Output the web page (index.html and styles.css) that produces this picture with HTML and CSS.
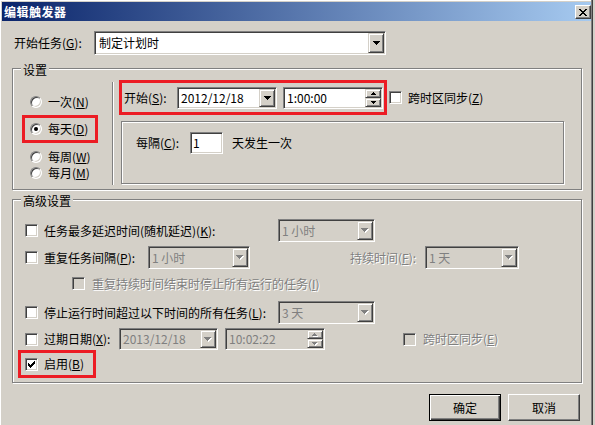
FILE: index.html
```html
<!DOCTYPE html>
<html lang="zh-CN">
<head>
<meta charset="utf-8">
<title>编辑触发器</title>
<link rel="stylesheet" href="styles.css">
</head>
<body>
<div class="window">
  <div class="titlebar">
    <span class="title">编辑触发器</span>
    <span class="close-btn"><svg width="8" height="7" viewBox="0 0 8 7"><path d="M0 0h2v1H0zM6 0h2v1H6zM1 1h2v1H1zM5 1h2v1H5zM2 2h4v1H2zM3 3h2v1H3zM2 4h4v1H2zM1 5h2v1H1zM5 5h2v1H5zM0 6h2v1H0zM6 6h2v1H6z" fill="#000"/></svg></span>
  </div>

  <div class="task-row">
    <span class="task-label">开始任务(<u>G</u>):</span>
    <div class="sunken combo combo-task">
      <span class="ctext">制定计划时</span>
      <span class="raised drop"><svg class="arrow" width="7" height="4" viewBox="0 0 7 4"><path d="M0 0h7v1H0zM1 1h5v1H1zM2 2h3v1H2zM3 3h1v1H3z"/></svg></span>
    </div>
  </div>

  <div class="group group-settings">
    <span class="legend">设置</span>
    <div class="radios">
      <div class="radio-item"><span class="radio"></span><span class="rlabel">一次(<u>N</u>)</span></div>
      <div class="mark mark-daily">
        <div class="radio-item"><span class="radio checked"></span><span class="rlabel">每天(<u>D</u>)</span></div>
      </div>
      <div class="radio-item r-week"><span class="radio"></span><span class="rlabel">每周(<u>W</u>)</span></div>
      <div class="radio-item"><span class="radio"></span><span class="rlabel">每月(<u>M</u>)</span></div>
    </div>
    <div class="vsep"></div>
    <div class="schedule">
      <div class="start-row">
        <div class="mark mark-start">
          <span class="start-label">开始(<u>S</u>):</span>
          <div class="sunken combo combo-date">
            <span class="ctext">2012/12/18</span>
            <span class="raised drop"><svg class="arrow" width="7" height="4" viewBox="0 0 7 4"><path d="M0 0h7v1H0zM1 1h5v1H1zM2 2h3v1H2zM3 3h1v1H3z"/></svg></span>
          </div>
          <div class="sunken combo field-time">
            <span class="ctext">1:00:00</span>
            <span class="spin">
              <span class="raised"><svg class="arrow" width="5" height="3" viewBox="0 0 5 3"><path d="M2 0h1v1H2zM1 1h3v1H1zM0 2h5v1H0z"/></svg></span>
              <span class="raised"><svg class="arrow" width="5" height="3" viewBox="0 0 5 3"><path d="M0 0h5v1H0zM1 1h3v1H1zM2 2h1v1H2z"/></svg></span>
            </span>
          </div>
        </div>
        <span class="check check-tz"></span><span class="lbl">跨时区同步(<u>Z</u>)</span>
      </div>
      <div class="etched recur">
        <span class="recur-label">每隔(<u>C</u>):</span>
        <span class="sunken field-num">1</span>
        <span class="recur-text">天发生一次</span>
      </div>
    </div>
  </div>

  <div class="group group-adv">
    <span class="legend">高级设置</span>

    <div class="adv-row row-a">
      <span class="check"></span>
      <span class="lbl w-long">任务最多延迟时间(随机延迟)(<u>K</u>):</span>
      <div class="sunken combo dis-field w-97">
        <span class="ctext">1 小时</span>
        <span class="raised drop"><svg class="arrow" width="8" height="5" viewBox="0 0 8 5"><path fill="#fff" d="M1 1h7v1H1zM2 2h5v1H2zM3 3h3v1H3zM4 4h1v1H4z"/><path fill="#808080" d="M0 0h7v1H0zM1 1h5v1H1zM2 2h3v1H2zM3 3h1v1H3z"/></svg></span>
      </div>
    </div>

    <div class="adv-row row-b">
      <span class="check"></span>
      <span class="lbl w-repeat">重复任务间隔(<u>P</u>):</span>
      <div class="sunken combo dis-field w-102">
        <span class="ctext">1 小时</span>
        <span class="raised drop"><svg class="arrow" width="8" height="5" viewBox="0 0 8 5"><path fill="#fff" d="M1 1h7v1H1zM2 2h5v1H2zM3 3h3v1H3zM4 4h1v1H4z"/><path fill="#808080" d="M0 0h7v1H0zM1 1h5v1H1zM2 2h3v1H2zM3 3h1v1H3z"/></svg></span>
      </div>
      <span class="dis-text lbl-duration">持续时间(<u>F</u>):</span>
      <div class="sunken combo dis-field w-94">
        <span class="ctext">1 天</span>
        <span class="raised drop"><svg class="arrow" width="8" height="5" viewBox="0 0 8 5"><path fill="#fff" d="M1 1h7v1H1zM2 2h5v1H2zM3 3h3v1H3zM4 4h1v1H4z"/><path fill="#808080" d="M0 0h7v1H0zM1 1h5v1H1zM2 2h3v1H2zM3 3h1v1H3z"/></svg></span>
      </div>
    </div>

    <div class="adv-row row-c">
      <span class="check dis"></span>
      <span class="lbl lbl-c dis-text">重复持续时间结束时停止所有运行的任务(<u>I</u>)</span>
    </div>

    <div class="adv-row row-d">
      <span class="check"></span>
      <span class="lbl w-long">停止运行时间超过以下时间的所有任务(<u>L</u>):</span>
      <div class="sunken combo dis-field w-97">
        <span class="ctext">3 天</span>
        <span class="raised drop"><svg class="arrow" width="8" height="5" viewBox="0 0 8 5"><path fill="#fff" d="M1 1h7v1H1zM2 2h5v1H2zM3 3h3v1H3zM4 4h1v1H4z"/><path fill="#808080" d="M0 0h7v1H0zM1 1h5v1H1zM2 2h3v1H2zM3 3h1v1H3z"/></svg></span>
      </div>
    </div>

    <div class="adv-row row-e">
      <span class="check"></span>
      <span class="lbl w-expire">过期日期(<u>X</u>):</span>
      <div class="sunken combo dis-field w-99">
        <span class="ctext">2013/12/18</span>
        <span class="raised drop"><svg class="arrow" width="8" height="5" viewBox="0 0 8 5"><path fill="#fff" d="M1 1h7v1H1zM2 2h5v1H2zM3 3h3v1H3zM4 4h1v1H4z"/><path fill="#808080" d="M0 0h7v1H0zM1 1h5v1H1zM2 2h3v1H2zM3 3h1v1H3z"/></svg></span>
      </div>
      <div class="sunken combo dis-field w-100 time-exp">
        <span class="ctext">10:02:22</span>
        <span class="spin">
          <span class="raised"><svg width="6" height="4" viewBox="0 0 6 4"><path fill="#fff" d="M3 1h1v1H3zM2 2h3v1H2zM1 3h5v1H1z"/><path fill="#808080" d="M2 0h1v1H2zM1 1h3v1H1zM0 2h5v1H0z"/></svg></span>
          <span class="raised"><svg width="6" height="4" viewBox="0 0 6 4"><path fill="#fff" d="M1 1h5v1H1zM2 2h3v1H2zM3 3h1v1H3z"/><path fill="#808080" d="M0 0h5v1H0zM1 1h3v1H1zM2 2h1v1H2z"/></svg></span>
        </span>
      </div>
      <span class="check dis check-tz2"></span>
      <span class="lbl lbl-tz2 dis-text">跨时区同步(<u>E</u>)</span>
    </div>

    <div class="mark mark-enable">
      <span class="check"><svg width="7" height="7" viewBox="0 0 7 7"><path d="M6 0h1v1H6zM5 1h2v1H5zM0 2h1v1H0zM4 2h3v1H4zM0 3h2v1H0zM3 3h3v1H3zM0 4h5v1H0zM1 5h3v1H1zM2 6h1v1H2z" fill="#000"/></svg></span>
      <span class="lbl">启用(<u>B</u>)</span>
    </div>
  </div>

  <div class="buttons">
    <span class="btn default">确定</span>
    <span class="btn">取消</span>
  </div>
</div>
</body>
</html>
```

FILE: styles.css
```css
html, body {
  margin: 0;
  padding: 0;
}
body {
  background: #d4d0c8;
  font-family: "Noto Sans CJK SC", "Microsoft YaHei", sans-serif;
  font-size: 12px;
  line-height: 16px;
  color: #000;
}
u {
  text-decoration: underline;
  text-underline-offset: 1px;
}

.window {
  width: 593px;
  height: 425px;
  box-sizing: border-box;
  padding: 2px 1px 0 2px;
  border-right: 1px solid #404040;
  box-shadow: inset -1px 0 0 #808080, inset 1px 1px 0 #fff;
  overflow: hidden;
}

/* title bar */
.titlebar {
  height: 19px;
  display: flex;
  justify-content: space-between;
  align-items: flex-start;
  background: linear-gradient(to right, #0a246a, #a6caf0);
  padding-left: 2px;
}
.title {
  color: #fff;
  font-weight: bold;
  line-height: 19px;
  letter-spacing: 0.5px;
}
.close-btn {
  width: 16px;
  height: 14px;
  margin-top: 3px;
  box-sizing: border-box;
  background: #d4d0c8;
  border: 1px solid;
  border-color: #fff #404040 #404040 #fff;
  box-shadow: inset -1px -1px 0 #808080;
  display: flex;
  align-items: center;
  justify-content: center;
}
.close-btn svg { display: block; }

/* generic 3D pieces */
.sunken {
  box-sizing: border-box;
  border: 1px solid;
  border-color: #808080 #fff #fff #808080;
  box-shadow: inset 1px 1px 0 #404040, inset -1px -1px 0 #d4d0c8;
  padding: 1px;
  background: #fff;
  display: flex;
  align-items: center;
}
.raised {
  box-sizing: border-box;
  border: 1px solid;
  border-color: #d4d0c8 #404040 #404040 #d4d0c8;
  box-shadow: inset 1px 1px 0 #fff, inset -1px -1px 0 #808080;
  background: #d4d0c8;
  display: flex;
  align-items: center;
  justify-content: center;
}
.etched {
  box-sizing: border-box;
  border: 1px solid #808080;
  box-shadow: inset 1px 1px 0 #fff, 1px 1px 0 #fff;
}
.arrow { display: block; }
.raised svg { display: block; }

.combo .ctext {
  flex: 1;
  min-width: 0;
  padding-left: 2px;
  white-space: nowrap;
  line-height: 16px;
}
.drop {
  width: 16px;
  align-self: stretch;
  flex: none;
}
.spin {
  display: flex;
  flex-direction: column;
  width: 16px;
  align-self: stretch;
  flex: none;
}
.spin .raised { flex: 1; }

.dis-field {
  background: #d4d0c8;
  color: #808080;
}
.dis-text {
  color: #808080;
  text-shadow: 1px 1px 0 #fff;
}

/* radio & check */
.radio {
  position: relative;
  flex: none;
  width: 12px;
  height: 12px;
  box-sizing: border-box;
  border-radius: 50%;
  border: 1px solid;
  border-color: #808080 #fff #fff #808080;
  box-shadow: inset 1px 1px 0 #404040, inset -1px -1px 0 #d4d0c8;
  background: #fff;
}
.radio.checked::after {
  content: "";
  position: absolute;
  left: 3px;
  top: 3px;
  width: 4px;
  height: 4px;
  border-radius: 50%;
  background: #000;
}
.check {
  flex: none;
  width: 13px;
  height: 13px;
  box-sizing: border-box;
  border: 1px solid;
  border-color: #808080 #fff #fff #808080;
  box-shadow: inset 1px 1px 0 #404040, inset -1px -1px 0 #d4d0c8;
  background: #fff;
  display: flex;
  align-items: center;
  justify-content: center;
}
.check svg { display: block; }
.check.dis { background: #d4d0c8; }
.lbl {
  margin-left: 6px;
  white-space: nowrap;
}

/* red annotation frames */
.mark {
  box-sizing: border-box;
  border: 3px solid #ec1c24;
}

/* top row */
.task-row {
  display: flex;
  align-items: center;
  margin: 10px 0 0 12px;
}
.task-label { width: 80px; white-space: nowrap; }
.combo-task {
  width: 292px;
  height: 24px;
}
.combo-task .ctext { padding-left: 3px; }

/* group boxes */
.group {
  position: relative;
  box-sizing: border-box;
  width: 570px;
  margin-left: 10px;
  border: 1px solid #808080;
  box-shadow: inset 1px 1px 0 #fff, 1px 1px 0 #fff;
}
.legend {
  position: absolute;
  top: -7px;
  left: 8px;
  padding: 0 2px;
  background: #d4d0c8;
  line-height: 16px;
  white-space: nowrap;
}
.group-settings {
  margin-top: 13px;
  height: 122px;
  display: flex;
}
.radios {
  width: 99px;
  padding-top: 25px;
  display: flex;
  flex-direction: column;
}
.radio-item {
  display: flex;
  align-items: center;
  height: 16px;
  padding-left: 17px;
}
.rlabel { margin-left: 6px; white-space: nowrap; }
.mark-daily {
  width: 76px;
  height: 28px;
  margin: 5px 0 0 9px;
  padding-top: 3px;
}
.mark-daily .radio-item { padding-left: 5px; }
.r-week { margin-top: 6px; }

.vsep {
  width: 1px;
  height: 103px;
  margin-top: 13px;
  margin-right: 1px;
  background: #808080;
  box-shadow: 1px 0 0 #fff;
}
.schedule {
  display: flex;
  flex-direction: column;
}
.start-row {
  display: flex;
  align-items: center;
  margin: 11px 0 0 5px;
}
.mark-start {
  display: flex;
  align-items: center;
  height: 35px;
  padding: 0 1px 0 2px;
}
.start-label { width: 53px; white-space: nowrap; }
.combo-date {
  width: 100px;
  height: 22px;
}
.field-time {
  width: 100px;
  height: 22px;
  margin-left: 6px;
}
.check-tz { margin-left: 2px; }

.recur {
  display: flex;
  align-items: flex-start;
  align-self: flex-start;
  width: 443px;
  height: 63px;
  margin: 6px 0 0 7px;
  padding: 10px 0 0 14px;
}
.recur-label { width: 54px; line-height: 22px; white-space: nowrap; }
.field-num {
  width: 33px;
  height: 22px;
  padding-left: 2px;
}
.recur-text { margin-left: 9px; line-height: 22px; white-space: nowrap; }

/* advanced group */
.group-adv {
  margin-top: 9px;
  height: 184px;
}
.adv-row {
  display: flex;
  align-items: center;
  padding-left: 12px;
}
.row-a { margin-top: 19px; height: 23px; }
.row-b { margin-top: 4px; height: 23px; }
.row-c { margin-top: 8px; height: 13px; padding-left: 59px; }
.row-d { margin-top: 11px; height: 23px; }
.row-e { margin-top: 4px; height: 22px; }
.lbl-c { margin-left: 7px; }

.w-long { width: 234px; }
.w-repeat { width: 104px; }
.w-expire { width: 75px; }
.w-97 { width: 97px; height: 23px; }
.w-102 { width: 102px; height: 23px; }
.w-94 { width: 94px; height: 23px; }
.w-99 { width: 99px; height: 22px; }
.w-100 { width: 100px; height: 22px; }
.lbl-duration {
  margin-left: 100px;
  width: 75px;
  white-space: nowrap;
}
.time-exp { margin-left: 7px; }
.check-tz2 { margin-left: 78px; }
.lbl-tz2 { margin-left: 7px; }

.mark-enable {
  display: flex;
  align-items: center;
  width: 78px;
  height: 28px;
  margin: 0 0 0 5px;
  padding-left: 4px;
}

/* buttons */
.buttons {
  display: flex;
  justify-content: flex-end;
  gap: 7px;
  margin-top: 11px;
  padding-right: 11px;
}
.btn {
  width: 72px;
  height: 27px;
  box-sizing: border-box;
  display: flex;
  align-items: center;
  justify-content: center;
  background: #d4d0c8;
  border: 1px solid;
  border-color: #fff #404040 #404040 #fff;
  box-shadow: inset -1px -1px 0 #808080;
}
.btn.default {
  border-color: #000;
  box-shadow: inset 1px 1px 0 #fff, inset -1px -1px 0 #404040, inset -2px -2px 0 #808080;
}
```
